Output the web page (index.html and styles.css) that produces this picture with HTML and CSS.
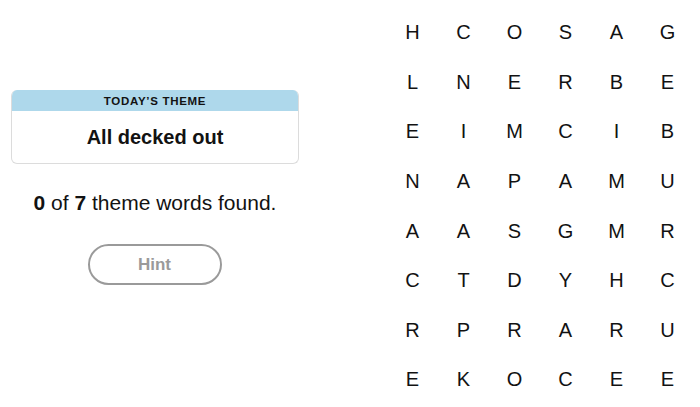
FILE: index.html
```html
<!DOCTYPE html>
<html>
<head>
<meta charset="utf-8">
<link rel="stylesheet" href="styles.css">
</head>
<body>
<div class="page">
  <div class="side">
    <div class="theme-card">
      <div class="theme-head">TODAY’S THEME</div>
      <div class="theme-body">All decked out</div>
    </div>
    <p class="found"><b>0</b> of <b>7</b> theme words found.</p>
    <button class="hint">Hint</button>
  </div>
  <div class="board">
    <span>H</span><span>C</span><span>O</span><span>S</span><span>A</span><span>G</span>
    <span>L</span><span>N</span><span>E</span><span>R</span><span>B</span><span>E</span>
    <span>E</span><span>I</span><span>M</span><span>C</span><span>I</span><span>B</span>
    <span>N</span><span>A</span><span>P</span><span>A</span><span>M</span><span>U</span>
    <span>A</span><span>A</span><span>S</span><span>G</span><span>M</span><span>R</span>
    <span>C</span><span>T</span><span>D</span><span>Y</span><span>H</span><span>C</span>
    <span>R</span><span>P</span><span>R</span><span>A</span><span>R</span><span>U</span>
    <span>E</span><span>K</span><span>O</span><span>C</span><span>E</span><span>E</span>
  </div>
</div>
</body>
</html>
```
FILE: styles.css
```css
html, body {
  margin: 0;
  padding: 0;
  background: #fff;
}
body {
  font-family: "Liberation Sans", Arial, sans-serif;
  color: #121212;
  width: 700px;
  height: 407px;
  overflow: hidden;
}
.page {
  display: flex;
}
.side {
  width: 310px;
  display: flex;
  flex-direction: column;
  align-items: center;
  padding-top: 90px;
}
.theme-card {
  width: 286px;
  border: 1px solid #dcdcdc;
  border-top: none;
  border-radius: 6px;
  overflow: hidden;
}
.theme-head {
  background: #aed8eb;
  height: 21px;
  line-height: 22px;
  text-align: center;
  font-size: 11.5px;
  font-weight: bold;
  letter-spacing: 0.7px;
}
.theme-body {
  height: 52px;
  line-height: 52px;
  text-align: center;
  font-size: 20px;
  font-weight: bold;
}
.found {
  margin: 24px 0 0;
  font-size: 21px;
  line-height: 30px;
}
.hint {
  margin-top: 26px;
  width: 134px;
  height: 41px;
  border: 2px solid #9a9a9a;
  border-radius: 21px;
  background: #fff;
  color: #9a9a9a;
  font-family: "Liberation Sans", Arial, sans-serif;
  font-weight: bold;
  font-size: 17px;
  padding: 0;
  margin-left: -1px;
}
.board {
  margin-left: 77px;
  margin-top: 8px;
  display: grid;
  grid-template-columns: repeat(6, 51px);
  grid-auto-rows: 49.6px;
}
.board span {
  display: flex;
  align-items: center;
  justify-content: center;
  font-size: 20px;
}
```
